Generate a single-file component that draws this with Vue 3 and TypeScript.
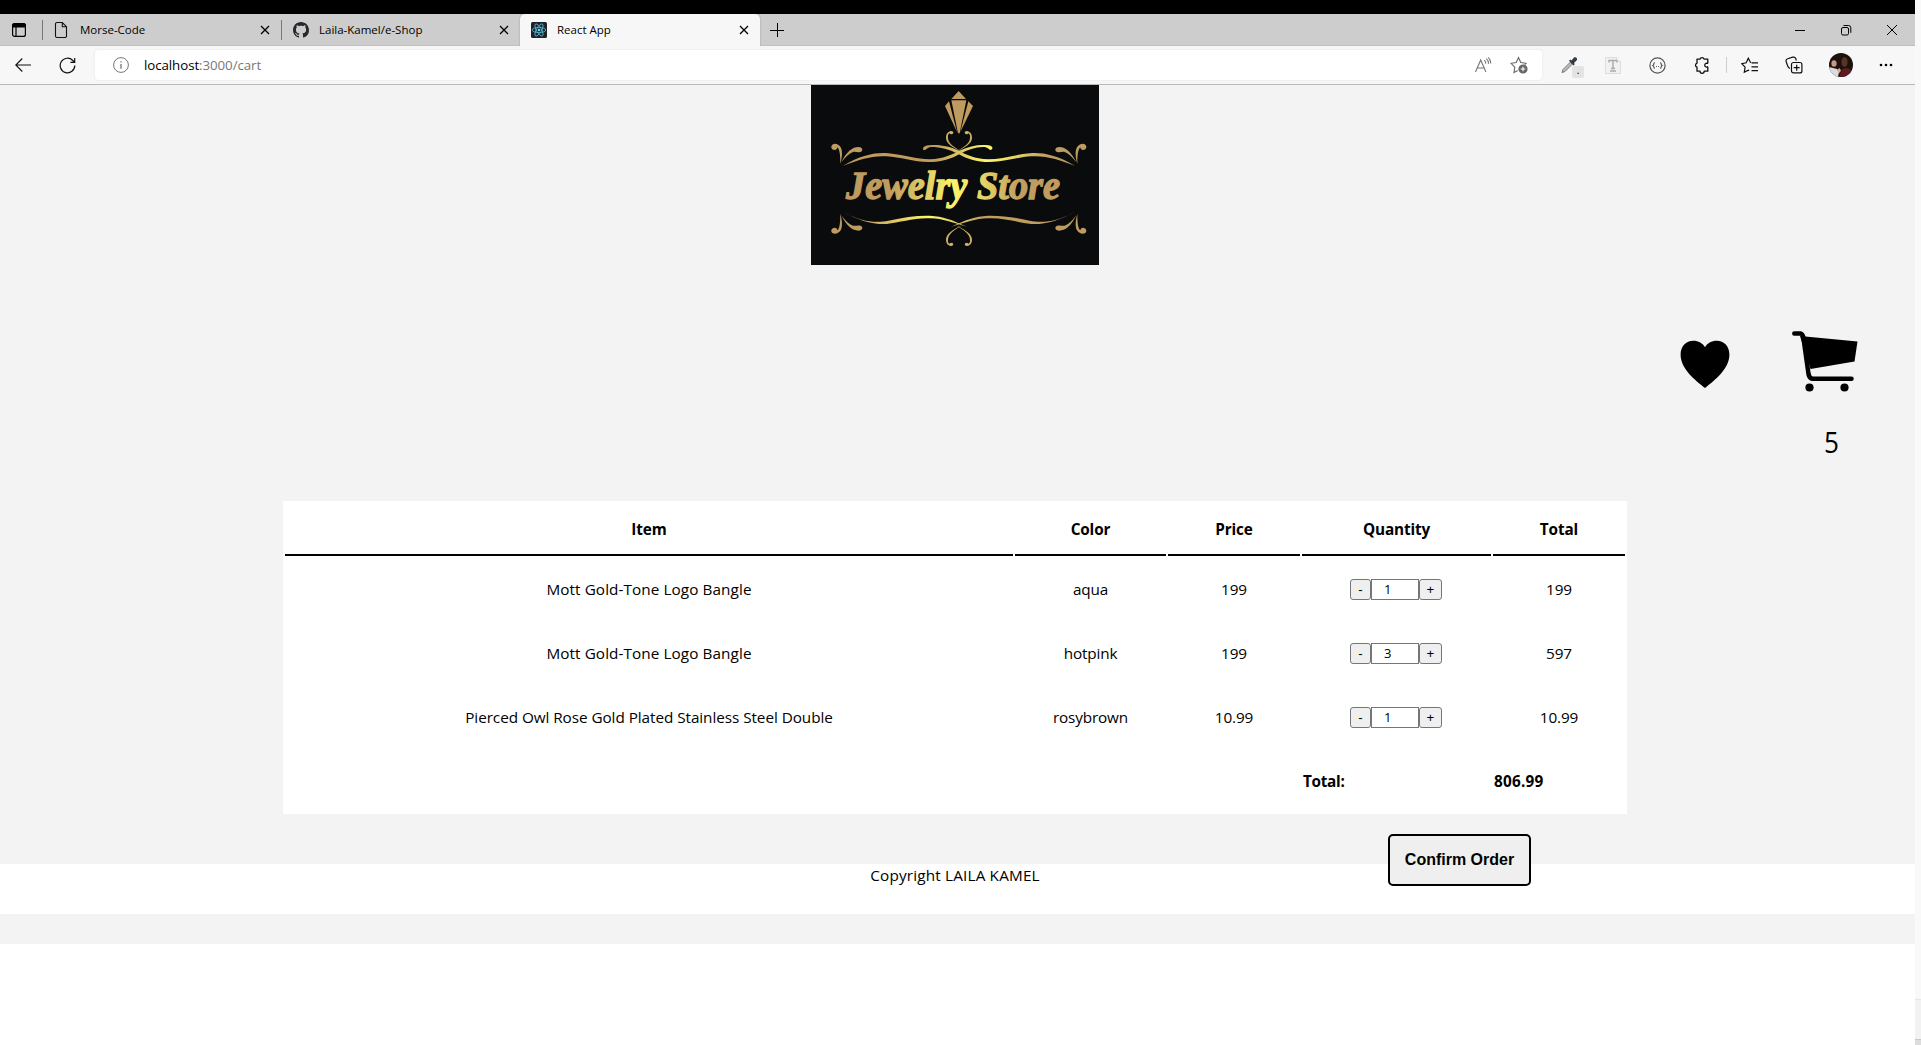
<script setup lang="ts">
import { computed } from 'vue'

interface Line {
  item: string
  color: string
  price: number
  quantity: number
}

const lines: Line[] = [
  { item: 'Mott Gold-Tone Logo Bangle', color: 'aqua', price: 199, quantity: 1 },
  { item: 'Mott Gold-Tone Logo Bangle', color: 'hotpink', price: 199, quantity: 3 },
  { item: 'Pierced Owl Rose Gold Plated Stainless Steel Double', color: 'rosybrown', price: 10.99, quantity: 1 },
]

const count = computed(() => lines.reduce((n, l) => n + l.quantity, 0))
const total = computed(() => lines.reduce((n, l) => n + l.quantity * l.price, 0))
</script>

<template>
  <div class="screen">
    <div class="window">
      <div class="bezel"></div>
      <div class="tabs">
        <div class="workspace">
          <svg width="16" height="16" viewBox="0 0 16 16" fill="none" stroke="#000" stroke-width="1.2">
            <rect x="1.6" y="1.6" width="12.8" height="12.8" rx="2" />
            <path d="M1.6 3.6a2 2 0 0 1 2-2h8.800a2 2 0 0 1 2 2v1.300H1.600z" fill="#000" />
            <path d="M5 5v9" />
          </svg>
        </div>
        <div class="tab">
          <svg class="fav" width="16" height="18" viewBox="0 0 16 18" fill="none" stroke="#111" stroke-width="1.1">
            <path d="M1.500 3a1.500 1.500 0 0 1 1.500-1.500h5.300l4.200 4.200V15a1.500 1.500 0 0 1-1.500 1.500H3A1.500 1.500 0 0 1 1.500 15zM8.300 1.500v4.200h4.200" />
          </svg>
          <span class="title">Morse-Code</span>
          <svg class="x" width="10" height="10" viewBox="0 0 10 10"><path d="M1 1l8 8M9 1l-8 8" stroke="#000" stroke-width="1.3" /></svg>
        </div>
        <div class="tab">
          <svg class="fav" width="16" height="16" viewBox="0 0 16 16">
            <path fill="#24292f" d="M8 0C3.580 0 0 3.580 0 8c0 3.540 2.290 6.530 5.470 7.590.4.070.55-.17.55-.38 0-.19-.01-.82-.01-1.490-2.010.37-2.530-.49-2.690-.94-.09-.23-.48-.94-.82-1.130-.28-.15-.68-.52-.01-.53.63-.01 1.080.58 1.230.82.72 1.210 1.870.87 2.330.66.07-.52.28-.87.51-1.070-1.780-.2-3.640-.89-3.640-3.950 0-.87.31-1.590.82-2.150-.08-.2-.36-1.020.08-2.120 0 0 .67-.21 2.200.82.64-.18 1.320-.27 2-.27s1.360.09 2 .27c1.530-1.040 2.200-.82 2.200-.82.44 1.100.16 1.920.08 2.120.51.56.82 1.270.82 2.150 0 3.070-1.870 3.750-3.650 3.950.29.25.54.73.54 1.480 0 1.070-.01 1.930-.01 2.200 0 .21.15.46.55.38A8.010 8.010 0 0 0 16 8c0-4.420-3.580-8-8-8z" />
          </svg>
          <span class="title">Laila-Kamel/e-Shop</span>
          <svg class="x" width="10" height="10" viewBox="0 0 10 10"><path d="M1 1l8 8M9 1l-8 8" stroke="#000" stroke-width="1.3" /></svg>
        </div>
        <div class="tab active">
          <svg class="fav" width="16" height="16" viewBox="0 0 16 16">
            <rect width="16" height="16" rx="1.5" fill="#20232a" />
            <g fill="none" stroke="#53bcd8" stroke-width=".8">
              <ellipse cx="8" cy="8" rx="6.800" ry="2.600" />
              <ellipse cx="8" cy="8" rx="6.800" ry="2.600" transform="rotate(60 8 8)" />
              <ellipse cx="8" cy="8" rx="6.800" ry="2.600" transform="rotate(120 8 8)" />
            </g>
            <circle cx="8" cy="8" r="1.300" fill="#61dafb" />
          </svg>
          <span class="title">React App</span>
          <svg class="x" width="10" height="10" viewBox="0 0 10 10"><path d="M1 1l8 8M9 1l-8 8" stroke="#000" stroke-width="1.3" /></svg>
        </div>
        <svg class="plus" width="14" height="14" viewBox="0 0 14 14"><path d="M7.500 0v14M0 7.500h14" stroke="#000" stroke-width="1" /></svg>
        <div class="controls">
          <svg width="46" height="32" viewBox="0 0 46 32" fill="none" stroke="#000"><path d="M18 16.500h10" /></svg>
          <svg width="46" height="32" viewBox="0 0 46 32" fill="none" stroke="#000"><rect x="18.500" y="13.500" width="7" height="7.500" rx="1.500" /><path d="M20.500 11.500h5a2.300 2.300 0 0 1 2.300 2.300v5" /></svg>
          <svg width="46" height="32" viewBox="0 0 46 32" fill="none" stroke="#000"><path d="M18 11l10 10M28 11L18 21" /></svg>
        </div>
      </div>

      <div class="toolbar">
        <svg class="nav back" width="16" height="14" viewBox="0 0 16 14" fill="none" stroke="#111" stroke-width="1.100"><path d="M16 7H.8M7.300.5L.8 7l6.500 6.500" /></svg>
        <svg class="nav" width="17" height="17" viewBox="0 0 17 17" fill="none" stroke="#111" stroke-width="1.200"><path d="M15.800 8.500a7.300 7.300 0 1 1-2-5l1.700 1.700M15.700 1v4.300h-4.300" /></svg>
        <div class="address">
          <svg width="16" height="16" viewBox="0 0 16 16" fill="none" stroke="#767676" stroke-width="1"><circle cx="8" cy="8" r="7.400" /><path d="M8 7v4.800M8 4.200v1.400" stroke-width="1.300" /></svg>
          <span class="url"><b>localhost</b>:3000/cart</span>
          <svg class="read" width="18" height="18" viewBox="0 0 18 18" fill="none" stroke="#777" stroke-width="1.100"><path d="M1.500 16L6.700 4l5.200 12M3.400 12h6.600M10.300 4.200c1 .9 1.500 2.100 1.500 3.600M12.300 2.700c1.500 1.300 2.300 3 2.300 5.100M14.300 1.300c1.700 1.700 2.500 3.900 2.500 6.300" /></svg>
          <svg width="18" height="18" viewBox="0 0 18 18" fill="none" stroke="#666" stroke-width="1.100"><path d="M7.700 14.500l-3.700 2 .8-5.300L1 7.300l5.200-.8L8.500 1.500l2.300 5 5.200.8-1.300 1.300" /><circle cx="13" cy="13" r="4.600" fill="#666" stroke="none" /><path d="M13 10.700v4.600M10.700 13h4.600" stroke="#fff" /></svg>
        </div>
        <div class="slot dropper">
          <svg width="18" height="18" viewBox="0 0 18 18">
            <path d="M2 16.500l1-3 7.300-7.300 2 2L5 15.500z" fill="#bbb" stroke="#777" />
            <path d="M9 4.800l1.300-1.300 1.200 1L14 1.600c1.700-1.300 4 .8 2.800 2.600L14 7l.8 1.300-1.300 1.300z" fill="#333a42" />
          </svg>
          <span class="badge">.</span>
        </div>
        <div class="slot">
          <svg width="16" height="17" viewBox="0 0 16 17"><path d="M.5.5h11l4 4v12H.5z" fill="#f1f1f1" stroke="#ddd" /><path d="M11.500.5v4h4" fill="#fff" stroke="#ddd" /><path d="M4 5.500V3.500h8v2M8 3.500v8M6 11.500h4M5 14h6" stroke="#aaa" fill="none" stroke-width="1.400" /></svg>
        </div>
        <div class="slot">
          <svg width="17" height="17" viewBox="0 0 17 17" fill="none" stroke="#555" stroke-width="1.200"><circle cx="8.500" cy="8.500" r="7.600" /><path d="M5.800 5.700c-1.300 0-.6 2.300-1.800 2.800 1.200.5.500 2.800 1.800 2.800M11.200 5.700c1.300 0 .6 2.300 1.800 2.800-1.200.5-.5 2.800-1.800 2.800M7 9.500h.9M9.200 9.500h.9" /></svg>
        </div>
        <div class="slot">
          <svg width="17" height="18" viewBox="0 0 17 18" fill="none" stroke="#111" stroke-width="1.300" stroke-linejoin="round"><path d="M4 3.200h3a2.100 2.100 0 0 1 4.100 0h3.700v4a.3.300 0 0 1-.4.200 1.900 1.900 0 1 0 0 3.500.3.300 0 0 1 .4.300v4h-3.600a2.100 2.100 0 0 1-4.200 0H4v-4a2.100 2.100 0 0 1 0-4z" /></svg>
        </div>
        <i class="rule"></i>
        <div class="slot">
          <svg width="18" height="17" viewBox="0 0 18 17" fill="none" stroke="#111" stroke-width="1.200"><path d="M10 5.500h-.5L7.300 1.200 5.200 5.800l-4.400.8 3.300 3.500-.8 5.100 4-2.100.9.400M10.500 5.800h6.500M10.500 9.800h6.500M10.500 13.600h6.500" /></svg>
        </div>
        <div class="slot">
          <svg width="18" height="18" viewBox="0 0 18 18" fill="none" stroke="#111" stroke-width="1.200"><rect x="6.500" y="6.500" width="10.400" height="10.400" rx="2" /><path d="M11.700 8.700v6M8.700 11.700h6M5 12.500c-1.500-.5-2-1.500-2.500-3L1.200 5.800c-.5-1.500 0-2.500 1.500-3l5-1.600c1.500-.4 2.600.1 3 1.300l.7 2" /></svg>
        </div>
        <div class="slot wide">
          <svg width="24" height="24" viewBox="0 0 24 24">
            <defs><clipPath id="av"><circle cx="12" cy="12" r="12" /></clipPath></defs>
            <g clip-path="url(#av)">
              <rect width="24" height="24" fill="#1c110d" />
              <path d="M11 24c0-6 2-9 6-9s7 3 7 9z" fill="#5c1b20" />
              <ellipse cx="15.500" cy="9" rx="3" ry="4.800" fill="#593527" />
              <ellipse cx="5" cy="10.500" rx="2.600" ry="3.200" fill="#c99a80" />
              <path d="M0 14l4 1 4 1 2 3-1 5H3z" fill="#d9dde2" />
              <path d="M8 17l2.500-2 1.500 2.500-2 3z" fill="#e0ad8c" />
            </g>
          </svg>
        </div>
        <div class="slot">
          <svg width="14" height="4" viewBox="0 0 14 4"><circle cx="2" cy="2" r="1.300" /><circle cx="7" cy="2" r="1.300" /><circle cx="12" cy="2" r="1.300" /></svg>
        </div>
      </div>

      <div class="page">
        <header>
          <svg class="logo" width="288" height="180" viewBox="33 15 864 540">
            <defs>
              <linearGradient id="gold" gradientUnits="userSpaceOnUse" x1="120" y1="0" x2="830" y2="0">
                <stop offset="0" stop-color="#bf9b5f" /><stop offset=".2" stop-color="#bf9b5f" />
                <stop offset=".48" stop-color="#faf36c" /><stop offset=".54" stop-color="#f5eb69" />
                <stop offset=".76" stop-color="#c19d60" /><stop offset="1" stop-color="#bf9b5f" />
              </linearGradient>
              <linearGradient id="goldTop" gradientUnits="userSpaceOnUse" x1="120" y1="0" x2="830" y2="0">
                <stop offset="0" stop-color="#bf9b5f" /><stop offset=".4" stop-color="#bf9b5f" />
                <stop offset=".62" stop-color="#fdf76e" /><stop offset=".7" stop-color="#f0e267" />
                <stop offset=".88" stop-color="#c19d60" /><stop offset="1" stop-color="#bf9b5f" />
              </linearGradient>
              <linearGradient id="goldLow" gradientUnits="userSpaceOnUse" x1="120" y1="0" x2="830" y2="0">
                <stop offset="0" stop-color="#bf9b5f" /><stop offset=".14" stop-color="#c9a961" />
                <stop offset=".38" stop-color="#fdf76e" /><stop offset=".6" stop-color="#c19d60" />
                <stop offset="1" stop-color="#bf9b5f" />
              </linearGradient>
              <g id="corner">
                <path d="M121 252C127 230 128 213 122 202C116 192 104 189 97 194C91 200 94 209 104 210C109 210 112 206 112 202C119 208 121 225 121 252z" />
                <path d="M124 247C140 214 158 201 175 201C188 201 190 212 183 215C174 219 167 214 159 216C147 220 136 231 124 247z" />
              </g>
            </defs>
            <rect x="33" y="15" width="864" height="540" fill="#090b0c" />
            <g fill="#bf9b5f">
              <path d="M476 33L498 57H454z" />
              <path d="M454 61H499L479 160H474z" />
              <path d="M447 64L471 156 435 78z" />
              <path d="M505 64L519 78 481 156z" />
            </g>
            <g fill="#bf9b5f">
              <use href="#corner" />
              <use href="#corner" transform="translate(953 0) scale(-1 1)" />
              <use href="#corner" transform="translate(0 653) scale(1 -1)" />
              <use href="#corner" transform="translate(953 653) scale(-1 -1)" />
            </g>
            <g fill="url(#goldTop)">
              <path d="M128 258C190 222 230 217 265 220C310 224 350 238 390 238C430 236 455 224 478 212C510 197 540 192 565 196C578 198 582 207 572 210C566 209 564 203 555 201C530 199 505 208 480 221C455 236 425 246 385 246C340 246 300 231 260 229C215 226 175 240 128 258z" />
              <path d="M826 258C764 222 724 217 689 220C644 224 604 238 564 238C524 236 499 224 476 212C450 199 415 192 389 196C376 196 366 202 370 210C380 211 379 203 393 201C422 201 447 208 474 221C499 236 529 246 569 246C614 246 654 231 694 229C739 226 779 240 826 258z" />
            </g>
            <g fill="#cfb062">
              <path d="M495 220C455 202 438 190 438 173C438 157 450 150 460 156C460 164 452 163 448 160C443 165 443 170 445 180C448 192 466 205 495 220z" />
              <path d="M458 220C498 202 516 190 516 173C516 157 504 150 494 156C494 164 502 163 506 160C511 165 511 170 509 180C506 192 488 205 458 220z" />
              <circle cx="454" cy="158" r="5" /><circle cx="500" cy="158" r="5" />
              <path d="M495 431C455 449 438 462 438 479C438 494 450 502 460 494C459 487 452 488 448 491C443 487 443 482 445 473C448 460 466 446 495 431z" />
              <path d="M458 431C498 449 516 462 516 479C516 494 504 502 494 494C495 487 502 488 506 491C511 487 511 482 509 473C506 460 488 446 458 431z" />
              <circle cx="454" cy="493" r="5" /><circle cx="500" cy="493" r="5" />
            </g>
            <g fill="url(#goldLow)">
              <path d="M128 395C190 429 230 428 265 422C310 412 350 406 390 407C430 409 455 419 500 440C455 427 430 416 390 415C340 413 300 428 260 432C215 434 175 420 128 395z" />
              <path d="M826 395C764 429 724 428 689 422C644 412 604 406 564 407C524 409 499 419 454 440C499 427 524 416 564 415C614 413 654 428 694 432C739 434 779 420 826 395z" />
            </g>
            <text class="brand" x="138" y="357" textLength="642" lengthAdjust="spacingAndGlyphs" fill="url(#gold)" stroke="url(#gold)" stroke-width="4">Jewelry Store</text>
          </svg>
        </header>

        <div class="shortcuts">
          <svg class="heart" width="50" height="49" viewBox="0 0 50 49"><path d="M25 48C15 40 .6 29 .6 14.500C.6 6.500 6 .8 13.200.8C18.500.8 22.800 3.200 25 7.300C27.200 3.200 31.500.8 36.800.8C44 .8 49.400 6.500 49.400 14.500C49.400 29 35 40 25 48z" /></svg>
          <div class="cart">
            <svg width="66" height="61" viewBox="0 0 66 61">
              <path d="M8 5L65.500 10.500 62.500 30.500 18.500 38z" />
              <path d="M2.300 2.500H8.500Q10.300 2.700 11.300 6L16.500 43Q17.300 47.700 21 47.700H59.500" fill="none" stroke="#000" stroke-width="4.500" stroke-linecap="round" />
              <circle cx="17.500" cy="56.500" r="4.100" /><circle cx="52.500" cy="56.500" r="4.100" />
            </svg>
            <span>{{ count }}</span>
          </div>
        </div>

        <table>
          <colgroup><col class="c1" /><col class="c2" /><col class="c3" /><col class="c4" /><col class="c3" /></colgroup>
          <thead>
            <tr><th>Item</th><th>Color</th><th>Price</th><th>Quantity</th><th>Total</th></tr>
          </thead>
          <tbody>
            <tr v-for="(l, i) in lines" :key="i">
              <td class="item">{{ l.item }}</td>
              <td>{{ l.color }}</td>
              <td>{{ l.price }}</td>
              <td>
                <div class="qty"><button class="minus">-</button><input :value="l.quantity" /><button class="more">+</button></div>
              </td>
              <td>{{ l.price * l.quantity }}</td>
            </tr>
            <tr class="sum"><td></td><td></td><td></td><td>Total:</td><td class="amount">{{ total.toFixed(2) }}</td></tr>
          </tbody>
        </table>

        <div class="actions"><button class="confirm">Confirm Order</button></div>
        <footer><span>Copyright LAILA KAMEL</span></footer>
        <div class="band"></div>
      </div>
    </div>
    <div class="edge"><div class="edge-mid"></div><div class="edge-low"></div></div>
  </div>
</template>

<style>
body { margin: 0; background: #fff; }
</style>

<style scoped>
* { box-sizing: border-box; }
svg { display: block; flex: none; }
.screen { display: flex; width: 1921px; height: 1045px; overflow: hidden; font-family: "Open Sans", "Noto Sans", sans-serif; color: #000; }
.window { width: 1915px; height: 1045px; display: flex; flex-direction: column; background: #fff; }
.bezel { height: 14px; background: #000; flex: none; }

.tabs { height: 32px; flex: none; display: flex; align-items: center; background: #cdcdcd; box-shadow: inset 0 -1px #c0c0c0; }
.workspace { width: 42px; padding-left: 11px; }
.tab { width: 239px; height: 32px; display: flex; align-items: center; position: relative; padding: 0 11px 0 12px; }
.tab:not(.active)::before { content: ""; position: absolute; left: 0; top: 6px; width: 1px; height: 20px; background: #777; }
.tab.active { width: 240px; background: #f7f7f7; border-radius: 5px 5px 0 0; padding-left: 11px; box-shadow: 0 0 2px #999; clip-path: inset(0 -2px 0 -2px); }
.fav { margin-right: 10px; }
.title { font-size: 11.5px; line-height: 16px; white-space: nowrap; flex: 1; }
.plus { margin-left: 10px; margin-bottom: 1px; }
.controls { margin-left: auto; display: flex; }

.toolbar { height: 39px; flex: none; display: flex; align-items: center; background: #f7f7f7; border-bottom: 1px solid #b9b9b9; }
.nav { margin-right: 19px; }
.back { margin: 0 28px 0 15px; }
.address { width: 1447px; height: 30px; border-radius: 4px; background: #fff; box-shadow: 0 0 3px #e4e4e4; display: flex; align-items: center; padding: 0 14px 0 18px; margin-right: 6px; }
.url { flex: 1; margin-left: 15px; font-size: 13.3px; letter-spacing: -0.07px; color: #777; line-height: 20px; }
.url b { font-weight: 400; color: #000; }
.read { margin-right: 18px; }
.slot { width: 44px; display: flex; justify-content: center; flex: none; position: relative; right: 1px; }
.slot.wide { width: 48px; right: 0; }
.badge { position: absolute; left: 25px; top: 10px; width: 12px; height: 12px; border-radius: 2px; background: #e3e3e3; font-size: 10px; line-height: 8px; text-align: center; }
.rule { width: 1px; height: 16px; background: #ccc; margin: 0 2px; }

.page { font-size: 15.3px; display: flex; flex-direction: column; background: linear-gradient(#f3f3f3, #f3f3f3) 0 0 / 100% 859px no-repeat #fff; flex: 1; }
header { display: flex; justify-content: center; padding-right: 5px; }
.brand { font-family: "Liberation Serif", serif; font-style: italic; font-weight: 700; font-size: 122px; }
.shortcuts { height: 236px; display: flex; justify-content: flex-end; padding: 66px 57px 0 0; }
.heart { margin: 9px 62px 0 0; }
.cart { display: flex; flex-direction: column; width: 66px; }
.cart span { font-size: 29px; line-height: 40px; margin: 30px 0 0 32px; transform: scaleX(0.9); transform-origin: left; }

table { table-layout: fixed; width: 1344px; height: 313px; border-spacing: 2px; margin-left: 283px; background: #fff; line-height: 22px; }
.c1 { width: 728px; } .c2 { width: 151px; } .c3 { width: 132px; } .c4 { width: 189px; }
th { height: 53px; padding: 0; border-bottom: 2px solid #000; font-weight: 700; letter-spacing: -0.12px; }
td { height: 62px; padding: 0; text-align: center; letter-spacing: -0.15px; }
.item { letter-spacing: 0.08px; }
tr:nth-child(3) .item { letter-spacing: -0.06px; }
.sum td { text-align: left; font-weight: 700; letter-spacing: -0.3px; padding-left: 1px; }
.sum .amount { letter-spacing: 0.25px; }
.qty { display: flex; justify-content: center; padding-right: 1px; }
.qty button, .qty input { height: 21px; border: 1px solid #767676; padding: 0; font: 13.3px "Liberation Sans", sans-serif; color: #000; }
.qty button { background: #efefef; border-radius: 3px; }
.qty .minus { width: 21px; }
.qty .more { width: 23px; }
.qty input { width: 48px; padding-left: 12px; background: #fff; font-family: "Open Sans", sans-serif; font-size: 13px; outline: 0; border-radius: 0; }

.actions { height: 50px; display: flex; padding: 20px 0 0 1388px; flex: none; }
.confirm { width: 143px; height: 52px; flex: none; position: relative; border: 2px solid #000; border-radius: 5px; background: #efefef; font: bold 16px "Liberation Sans", Arial, sans-serif; padding: 0; color: #000; }
footer { height: 50px; background: #fff; text-align: center; padding-right: 5px; line-height: 22px; letter-spacing: 0.17px; }
.band { height: 30px; background: #f3f3f3; }

.edge { width: 6px; background: #f9f9f9; padding-top: 999px; }
.edge-mid { height: 40px; background: #f2f2f2; border-top: 1px solid #e6e6e6; }
.edge-low { height: 6px; background: #dcdcdc; border-top: 1px solid #c8c8c8; }
</style>
